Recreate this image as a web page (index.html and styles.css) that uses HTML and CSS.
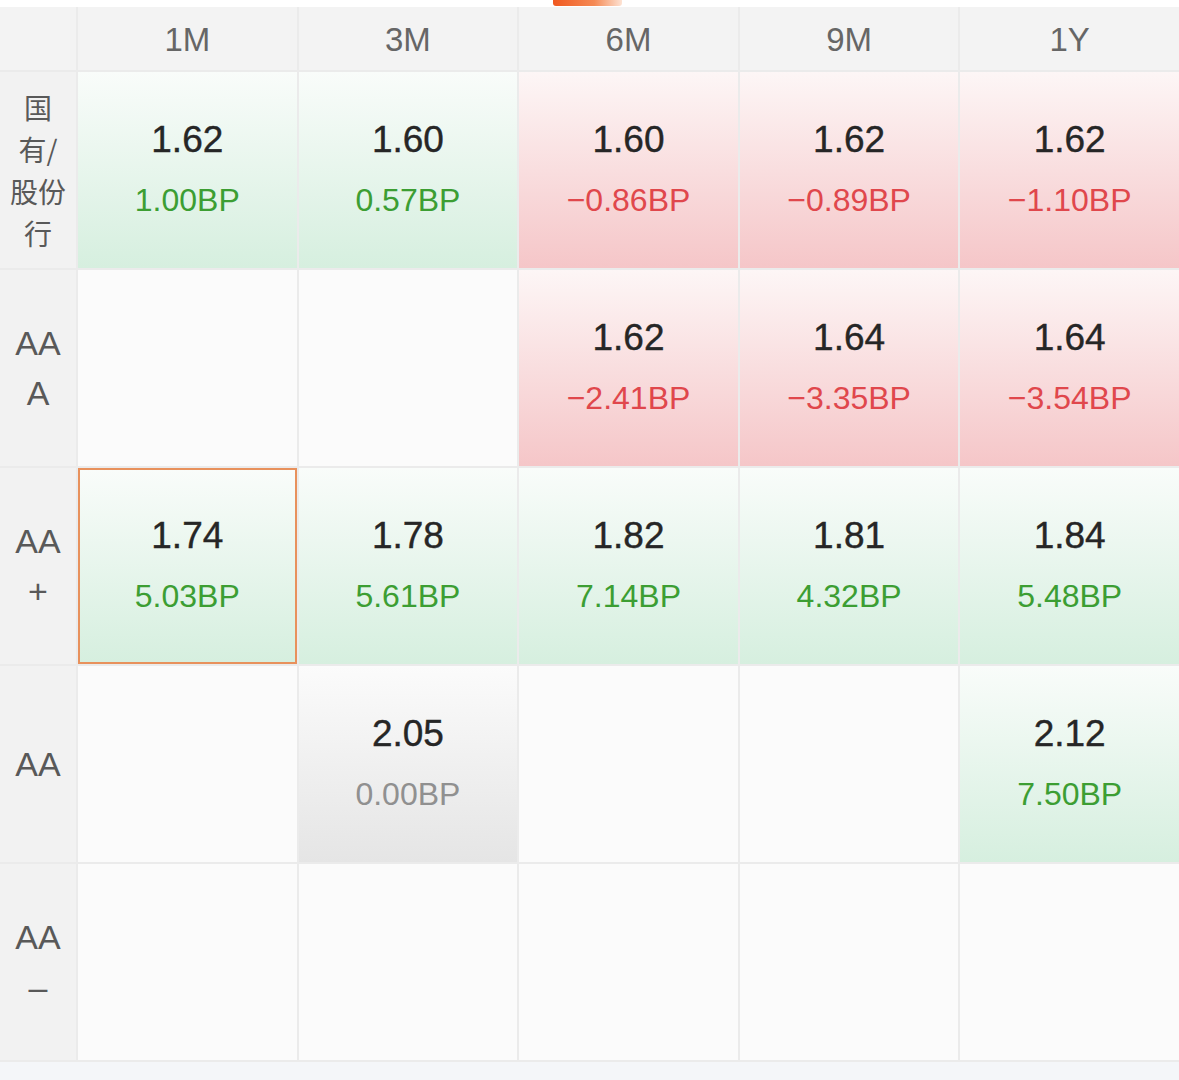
FILE: index.html
```html
<!DOCTYPE html>
<html lang="zh-CN">
<head>
    <meta charset="UTF-8">
    <meta name="viewport" content="width=device-width, initial-scale=1.0">
    <title>存单利率矩阵</title>
    <link rel="stylesheet" href="styles.css">
</head>
<body>
    <div class="top">
        <span class="tab"></span>
    </div>

    <div class="matrix">
        <div class="corner"></div>
        <div class="term">1M</div>
        <div class="term">3M</div>
        <div class="term">6M</div>
        <div class="term">9M</div>
        <div class="term">1Y</div>

        <!-- 国有/股份行 -->
        <div class="rating cn"><span>国有/股份行</span></div>
        <div class="cell up"><span class="rate">1.62</span><span class="bp">1.00BP</span></div>
        <div class="cell up"><span class="rate">1.60</span><span class="bp">0.57BP</span></div>
        <div class="cell down"><span class="rate">1.60</span><span class="bp">−0.86BP</span></div>
        <div class="cell down"><span class="rate">1.62</span><span class="bp">−0.89BP</span></div>
        <div class="cell down"><span class="rate">1.62</span><span class="bp">−1.10BP</span></div>

        <!-- AAA -->
        <div class="rating"><span>AAA</span></div>
        <div class="cell"></div>
        <div class="cell"></div>
        <div class="cell down"><span class="rate">1.62</span><span class="bp">−2.41BP</span></div>
        <div class="cell down"><span class="rate">1.64</span><span class="bp">−3.35BP</span></div>
        <div class="cell down"><span class="rate">1.64</span><span class="bp">−3.54BP</span></div>

        <!-- AA+ -->
        <div class="rating"><span>AA+</span></div>
        <div class="cell up active"><span class="rate">1.74</span><span class="bp">5.03BP</span></div>
        <div class="cell up"><span class="rate">1.78</span><span class="bp">5.61BP</span></div>
        <div class="cell up"><span class="rate">1.82</span><span class="bp">7.14BP</span></div>
        <div class="cell up"><span class="rate">1.81</span><span class="bp">4.32BP</span></div>
        <div class="cell up"><span class="rate">1.84</span><span class="bp">5.48BP</span></div>

        <!-- AA -->
        <div class="rating"><span>AA</span></div>
        <div class="cell"></div>
        <div class="cell flat"><span class="rate">2.05</span><span class="bp">0.00BP</span></div>
        <div class="cell"></div>
        <div class="cell"></div>
        <div class="cell up"><span class="rate">2.12</span><span class="bp">7.50BP</span></div>

        <!-- AA- -->
        <div class="rating"><span>AA–</span></div>
        <div class="cell"></div>
        <div class="cell"></div>
        <div class="cell"></div>
        <div class="cell"></div>
        <div class="cell"></div>
    </div>

    <div class="bottom"></div>
</body>
</html>
```

FILE: styles.css
```css
body{
    margin: 0;
    background-color: #ffffff;
    font-family: "Liberation Sans", "Noto Sans CJK SC", sans-serif;
}

.top{
    height: 7px;
    background-color: #ffffff;
    position: relative;
}
.tab{
    position: absolute;
    left: 553px;
    top: 0;
    width: 69px;
    height: 6px;
    border-radius: 0 0 3px 3px;
    background-image: linear-gradient(to right, #f0581f, #f58a55 60%, #fde3d4);
}

.matrix{
    display: grid;
    grid-template-columns: 76px repeat(5, 1fr);
    grid-template-rows: 63px repeat(5, 196px);
    gap: 2px;
    background-color: #ebebeb;
    padding-bottom: 2px;
}

.corner,
.term{
    background-color: #f3f3f3;
}
.term{
    display: flex;
    align-items: center;
    justify-content: center;
    font-size: 33px;
    color: #666666;
    padding-top: 3px;
}

.rating{
    background-color: #f2f2f2;
    display: flex;
    align-items: center;
    justify-content: center;
    font-size: 34px;
    line-height: 50px;
    color: #595959;
}
.rating span{
    display: block;
    width: 52px;
    text-align: center;
    word-break: break-all;
}
.rating.cn{
    font-family: "Noto Sans CJK SC", sans-serif;
    font-size: 28px;
    line-height: 42px;
}
.rating.cn span{
    width: 60px;
    word-break: normal;
}

.cell{
    background-color: #fbfbfb;
    display: flex;
    flex-direction: column;
    align-items: center;
    justify-content: center;
    gap: 16px;
    box-sizing: border-box;
}
.cell.up{
    background-image: linear-gradient(to bottom, #f9fcfa, #d6efdf);
}
.cell.down{
    background-image: linear-gradient(to bottom, #fdf6f6, #f5c6c8);
}
.cell.flat{
    background-image: linear-gradient(to bottom, #fbfbfb, #e5e5e5);
}
.cell.active{
    border: 2px solid #e8915c;
}

.rate{
    font-size: 37px;
    line-height: 44px;
    color: #262626;
    -webkit-text-stroke: 0.4px #262626;
}
.bp{
    font-size: 32px;
    line-height: 44px;
}
.up .bp{
    color: #3c9e33;
}
.down .bp{
    color: #e0474c;
}
.flat .bp{
    color: #909090;
}

.bottom{
    height: 20px;
    background-color: #f4f6f9;
}
```
